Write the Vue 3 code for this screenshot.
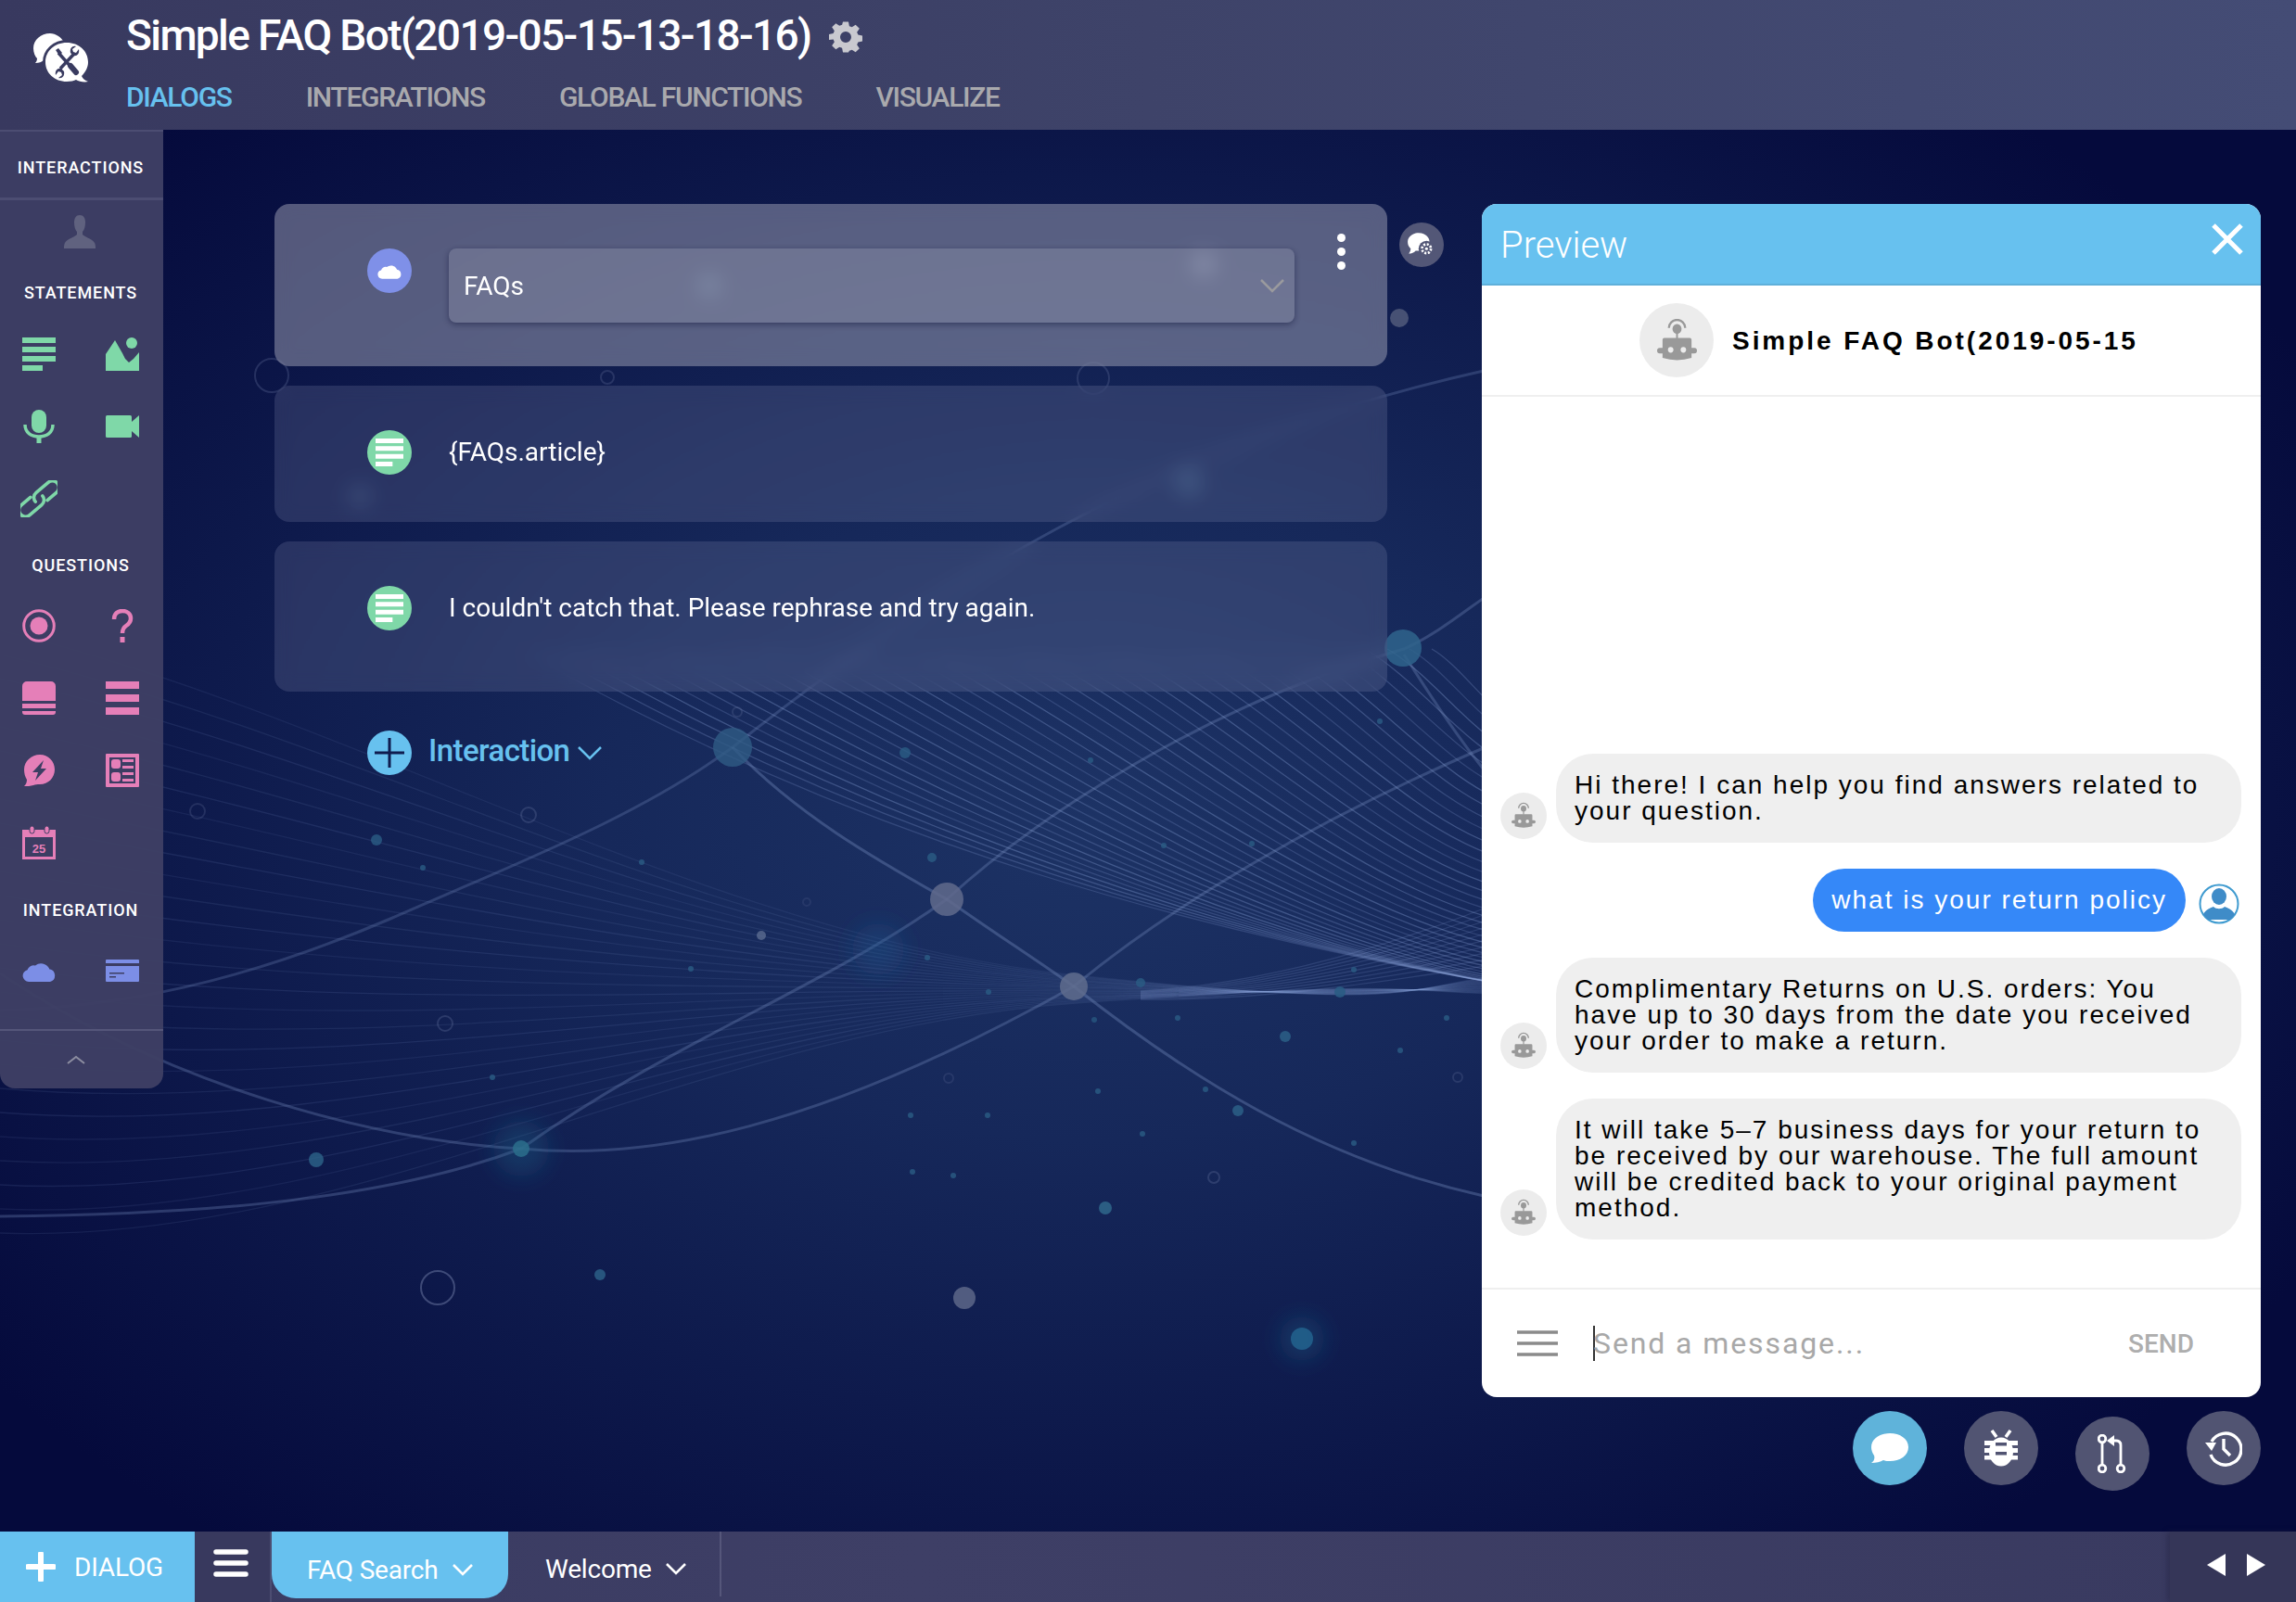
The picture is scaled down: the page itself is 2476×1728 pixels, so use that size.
<script setup>
const ff = (n) => Math.round(n * 10) / 10

const fine = []
// left fan: lines that sweep from the left edge into the crossing point
for (let i = 0; i < 26; i++) {
  const y = 680 + i * 26
  fine.push({ d: `M0 ${y} C 380 ${ff(y + 90 - i * 3)}, 760 ${ff(1010 + i * 4)}, 1160 ${ff(1052 + i * 1.2)} S 1500 ${ff(1062 + i * 0.4)}, 1640 ${ff(1050 + i * 0.9)}`, o: 0.09 + (i % 3) * 0.015 })
}
// long fan: gentle curves running down to the right, which spread out again at the panel edge
for (let i = 0; i < 42; i++) {
  const x = 560 + i * 24
  const span = 1640 - x
  const d = Math.max(0, x - 700)
  const end = 1065 - 0.0004 * d * d
  fine.push({ d: `M${x} 700 C ${ff(x + span * 0.35)} ${ff(700 + span * 0.2)}, ${ff(1640 - span * 0.3)} ${ff(end - span * 0.05)}, 1640 ${ff(end)}`, o: 0.22 + (i % 4) * 0.04 })
}
// rising fan at the far right
for (let i = 0; i < 10; i++) {
  fine.push({ d: `M1230 ${1078 - i} C 1360 ${ff(1080 - i * 2)}, 1500 ${ff(1058 - i * 4)}, 1640 ${ff(1036 - i * 8)}`, o: 0.18 })
}

const major = [
  { d: 'M0 1090 C 130 1086, 260 1060, 421 991 C 560 930, 690 880, 790 806 C 1000 640, 1240 480, 1600 400', o: 0.26, w: 3 },
  { d: 'M790 806 C 860 880, 950 930, 1021 970 C 1070 1005, 1110 1030, 1158 1064 C 1280 1160, 1420 1250, 1600 1290', o: 0.34, w: 3 },
  { d: 'M0 1050 C 180 1170, 400 1230, 562 1239 C 700 1252, 880 1220, 1158 1064 C 1260 980, 1420 880, 1640 790', o: 0.3, w: 3 },
  { d: 'M0 1312 C 180 1310, 400 1300, 562 1239 C 730 1120, 880 1070, 1021 970 C 1120 880, 1300 760, 1514 700 C 1560 680, 1600 640, 1640 620', o: 0.3, w: 3 },
  { d: 'M1514 706 C 1530 730, 1560 780, 1600 830', o: 0.3, w: 3 }
]

const dot = '#2a5c84'
const nodes = [
  [790, 806, 21, '#2f5b84', .8], [1021, 970, 18, '#606a8c', .85], [1158, 1064, 15, '#5f6c8d', .85],
  [562, 1239, 9, '#2b6f8c', .85], [341, 1251, 8, '#2d6489', .8], [1040, 1400, 12, '#626b8c', .8],
  [1404, 1444, 12, '#21608c', .9], [1513, 699, 20, '#2f648c', .85], [1509, 343, 10, '#596380', .75],
  [1298, 285, 15, '#8090b4', .32], [765, 308, 14, '#5d88ac', .28], [1282, 520, 17, '#5d88ac', .25], [388, 535, 14, '#5d88ac', .2],
  [821, 1009, 5, '#5b6b90', .8], [647, 1375, 6, dot, .9], [1192, 1303, 7, '#2e6488', .9],
  [1335, 1198, 6, dot, .9], [1386, 1118, 6, dot, .9], [1445, 1070, 6, dot, .9],
  [976, 812, 6, dot, .8], [406, 906, 6, dot, .8], [1230, 1060, 5, dot, .8],
  [1005, 925, 5, dot, .8], [1270, 1098, 3, dot, .8], [1180, 1100, 3, dot, .7],
  [1300, 1175, 3, dot, .8], [1066, 1070, 3, dot, .8], [1000, 1033, 3, dot, .8],
  [745, 1045, 3, dot, .8], [456, 936, 3, dot, .8], [692, 930, 3, dot, .8],
  [531, 1162, 3, dot, .8], [982, 1203, 3, dot, .8], [1065, 1203, 3, dot, .8],
  [1184, 1177, 3, dot, .8], [1232, 1223, 3, dot, .8], [984, 1264, 3, dot, .8],
  [1028, 1268, 3, dot, .8], [1460, 1046, 3, dot, .8], [1510, 1133, 3, dot, .8],
  [1560, 1098, 3, dot, .8], [1460, 1233, 3, dot, .8], [1488, 778, 3, dot, .8],
  [1176, 820, 3, dot, .8], [1350, 910, 3, dot, .8], [1255, 912, 3, dot, .8]
]
const rings = [
  [293, 405, 18, .22], [655, 407, 7, .2], [1179, 408, 17, .2], [472, 1389, 18, .4], [1309, 1270, 6, .22],
  [480, 1104, 8, .22], [570, 879, 8, .22], [213, 875, 8, .18], [1023, 1163, 5, .15],
  [870, 973, 4, .12], [1572, 1162, 5, .18], [795, 768, 5, .18]
]
const glows = [[947, 1024, 28, '#1f5a90', .32], [562, 1239, 30, '#1f6a90', .3], [1404, 1444, 24, '#1f6a90', .3]]

const intro = ['Hi there! I can help you find answers related to your question.']
const statementIcons = ['lines', 'image', 'mic', 'video', 'link']
const questionIcons = ['radio', 'help', 'stack', 'bars', 'bolt', 'form', 'cal']
</script>

<template>
  <div class="page">
    <!-- shared icon definitions -->
    <svg class="defs" width="0" height="0" aria-hidden="true">
      <symbol id="robot" viewBox="0 0 44 48">
        <path d="M13 10a9 9 0 0 1 18 0" fill="none" stroke="currentColor" stroke-width="2.400" />
        <ellipse cx="22" cy="11" rx="5" ry="5.500" fill="currentColor" />
        <rect x="21" y="13" width="2" height="9" fill="currentColor" />
        <path d="M8 21h28a2 2 0 0 1 2 2v9h3a2.500 2.500 0 0 1 0 6h-3v5q-16 5-32 0v-5H3a2.500 2.500 0 0 1 0-6h3v-9a2 2 0 0 1 2-2z" fill="currentColor" />
        <ellipse cx="15" cy="34" rx="3" ry="3.200" fill="#ececec" />
        <ellipse cx="29" cy="34" rx="3" ry="3.200" fill="#ececec" />
      </symbol>
      <symbol id="lines" viewBox="0 0 36 36">
        <path d="M0 0h36v6H0zM0 10h36v6H0zM0 20h36v6H0zM0 30h22v6H0z" fill="currentColor" />
      </symbol>
      <symbol id="cloud" viewBox="0 0 36 24">
        <path d="M7 24a6.500 6.500 0 0 1-1.500-12.800A7 7 0 0 1 14 6.500 10 10 0 0 1 29 9.500a5.500 5.500 0 0 1 0 .8A7 7 0 0 1 30 24z" fill="currentColor" />
      </symbol>
    </svg>

    <header class="topbar">
      <svg class="logo" viewBox="0 0 60 54">
        <path d="M18 0C8 0 0 7 0 16c0 5 2 9 4 11 0 2-1 4-2 5 4 0 7-1 9-3 6 2 12 2 16-2 9-6 10-17 0-24-3-2-6-3-9-3z" fill="#fff" />
        <ellipse cx="36" cy="31" rx="26" ry="24" fill="#393b60" />
        <path d="M36 10c-13 0-23 9-23 21s10 21 23 21c4 0 8-1 10-2 3 2 9 3 13 2-3-1-6-3-7-6 4-4 7-9 7-15 0-12-10-21-23-21z" fill="#fff" />
        <path d="M27 21l17 19" stroke="#393b60" stroke-width="3.400" fill="none" />
        <path d="M40 35l6 7" stroke="#393b60" stroke-width="6" fill="none" stroke-linecap="round" />
        <path d="M24 18l3-2 4 5-3 3z" fill="#393b60" />
        <path d="M43 23L29 38" stroke="#393b60" stroke-width="3.400" fill="none" />
        <path d="M49 17l-3 4-3-1-1-3 4-3c-4-1-7 2-6 7l3 3c4 1 7-2 6-7zM24 45l3-4 3 1 1 3-4 3c4 1 7-2 6-7l-3-3c-4-1-7 2-6 7z" fill="#393b60" />
      </svg>
      <div class="head-main">
        <div class="bot-row">
          <h1>Simple FAQ Bot(2019-05-15-13-18-16)</h1>
          <svg class="gear" viewBox="0 0 24 24"><path fill-rule="evenodd" d="M10 1h4l.6 3.100 1.900.8 2.600-1.800 2.800 2.800-1.800 2.600.8 1.900 3.100.6v4l-3.100.6-.8 1.900 1.800 2.600-2.800 2.800-2.600-1.800-1.900.8L14 23h-4l-.6-3.100-1.900-.8-2.600 1.800-2.800-2.800 1.800-2.600-.8-1.900L0 14v-4l3.100-.6.8-1.900-1.800-2.600 2.800-2.800 2.600 1.800 1.900-.8zM12 8a4 4 0 1 0 0 8 4 4 0 0 0 0-8z" /></svg>
        </div>
        <nav class="tabs">
          <a class="active">DIALOGS</a><a>INTEGRATIONS</a><a>GLOBAL FUNCTIONS</a><a>VISUALIZE</a>
        </nav>
      </div>
    </header>

    <main class="stage">
      <svg class="backdrop" viewBox="0 0 2476 1512" width="2476" height="1512" aria-hidden="true">
        <defs>
          <filter id="soft" x="-100%" y="-100%" width="300%" height="300%"><feGaussianBlur stdDeviation="11" /></filter>
        </defs>
        <g transform="translate(0,-140)" fill="none">
          <path v-for="(l, i) in fine" :key="'f' + i" :d="l.d" stroke="#8ea6dc" :stroke-opacity="l.o" stroke-width="1.300" />
          <path v-for="(l, i) in major" :key="'m' + i" :d="l.d" stroke="#7f95c8" :stroke-opacity="l.o" :stroke-width="l.w" />
          <circle v-for="(g, i) in glows" :key="'g' + i" :cx="g[0]" :cy="g[1]" :r="g[2]" :fill="g[3]" :fill-opacity="g[4]" filter="url(#soft)" />
          <circle v-for="(r, i) in rings" :key="'r' + i" :cx="r[0]" :cy="r[1]" :r="r[2]" stroke="#8a96bd" :stroke-opacity="r[3]" stroke-width="2" />
          <circle v-for="(n, i) in nodes" :key="'n' + i" :cx="n[0]" :cy="n[1]" :r="n[2]" :fill="n[3]" :fill-opacity="n[4]" />
        </g>
      </svg>

      <aside class="sidebar">
        <div class="side-head">INTERACTIONS</div>
        <div class="side-person">
          <svg viewBox="0 0 36 36" width="36" height="36"><path d="M18 0c4 0 6 3 6 8 0 4-1 8-3 10v3c3 3 11 5 13 9 1 2 1 4 1 6H1c0-2 0-4 1-6 2-4 10-6 13-9v-3c-2-2-3-6-3-10 0-5 2-8 6-8z" fill="#60627f" /></svg>
        </div>
        <div class="side-label l1">STATEMENTS</div>
        <div class="side-grid green">
          <div v-for="n in statementIcons" :key="n" class="cell">
            <svg v-if="n === 'lines'" width="36" height="36"><use href="#lines" /></svg>
            <svg v-else-if="n === 'image'" viewBox="0 0 36 36" width="36" height="36"><circle cx="28" cy="6" r="6" fill="currentColor" /><path d="M0 36V18L10 3l8 14 3 6 4 4 5-4 6-7v20z" fill="currentColor" /></svg>
            <svg v-else-if="n === 'mic'" viewBox="0 0 36 36" width="36" height="36"><rect x="10" y="0" width="16" height="25" rx="8" fill="currentColor" /><path d="M3 16c0 9 7 13 15 13s15-4 15-13" fill="none" stroke="currentColor" stroke-width="3.500" /><rect x="15.500" y="28" width="5" height="8" fill="currentColor" /></svg>
            <svg v-else-if="n === 'video'" viewBox="0 0 36 24" width="36" height="24"><rect width="28" height="24" rx="1.500" fill="currentColor" /><path d="M36 0v24L28 17V7z" fill="currentColor" /></svg>
            <svg v-else-if="n === 'link'" viewBox="0 0 40 40" width="40" height="40"><g fill="none" stroke="currentColor" stroke-width="3.600" stroke-linecap="round" transform="rotate(-40 20 20)"><path d="M14 13H1a7 7 0 0 0 0 14h17a7 7 0 0 0 7-7" /><path d="M15 20a7 7 0 0 1 7-7h17a7 7 0 0 1 0 14H26" /></g></svg>
          </div>
        </div>
        <div class="side-label l2">QUESTIONS</div>
        <div class="side-grid pink">
          <div v-for="n in questionIcons" :key="n" class="cell">
            <svg v-if="n === 'radio'" viewBox="0 0 36 36" width="36" height="36"><circle cx="18" cy="18" r="16.300" fill="none" stroke="currentColor" stroke-width="3" /><circle cx="18" cy="18" r="9.500" fill="currentColor" /></svg>
            <svg v-else-if="n === 'help'" viewBox="0 0 36 36" width="36" height="36"><path d="M9 11c0-6 4-9 9-9s9 3 9 8c0 4-2 6-5 8-3 2-4 4-4 8" fill="none" stroke="currentColor" stroke-width="4.500" /><rect x="15.500" y="30" width="5" height="6" fill="currentColor" /></svg>
            <svg v-else-if="n === 'stack'" viewBox="0 0 36 36" width="36" height="36"><path d="M5 0h26a5 5 0 0 1 5 5v16H0V5a5 5 0 0 1 5-5zM0 24h36v5H0zM0 32h36v1a3 3 0 0 1-3 3H3a3 3 0 0 1-3-3z" fill="currentColor" /></svg>
            <svg v-else-if="n === 'bars'" viewBox="0 0 36 36" width="36" height="36"><path d="M0 0h36v8H0zM0 14h36v8H0zM0 28h36v8H0z" fill="currentColor" /></svg>
            <svg v-else-if="n === 'bolt'" viewBox="0 0 36 36" width="36" height="36"><path d="M19 1c9 0 16 7 16 16s-7 16-16 16c-3 0-5 0-7 1-3 1-7 1-10 1 2-2 3-4 3-7-2-3-3-7-3-11C2 8 10 1 19 1z" fill="currentColor" /><path d="M23 7 11 20h6l-3 9 12-13h-6z" fill="#3d3e63" /></svg>
            <svg v-else-if="n === 'form'" viewBox="0 0 36 36" width="36" height="36"><path fill-rule="evenodd" d="M1 0h34a1 1 0 0 1 1 1v34a1 1 0 0 1-1 1H1a1 1 0 0 1-1-1V1a1 1 0 0 1 1-1zM4 4v28h28V4z" fill="currentColor" /><rect x="6" y="6" width="10" height="10" rx="3" fill="currentColor" /><rect x="6" y="20" width="10" height="10" rx="3" fill="currentColor" /><path d="M18 6h12v3H18zM18 13h12v3H18zM18 20h12v3H18zM18 27h12v3H18z" fill="currentColor" /></svg>
            <svg v-else-if="n === 'cal'" viewBox="0 0 36 36" width="36" height="36"><path fill-rule="evenodd" d="M0 4h36v32H0zM3 12v21h30V12z" fill="currentColor" /><rect x="8" y="0" width="5" height="8" rx="2.500" fill="currentColor" stroke="#3d3e63" stroke-width="1" /><rect x="24" y="0" width="5" height="8" rx="2.500" fill="currentColor" stroke="#3d3e63" stroke-width="1" /><text x="18" y="28.500" text-anchor="middle" class="cal-num">25</text></svg>
          </div>
        </div>
        <div class="side-label l3">INTEGRATION</div>
        <div class="side-grid blue">
          <div class="cell"><svg width="36" height="24"><use href="#cloud" /></svg></div>
          <div class="cell"><svg viewBox="0 0 36 24" width="36" height="24"><path d="M1 0h34a1 1 0 0 1 1 1v3H0V1a1 1 0 0 1 1-1zM0 7h36v16a1 1 0 0 1-1 1H1a1 1 0 0 1-1-1z" fill="currentColor" /><path d="M4 14h16v1.500H4zM4 18h7v1.500H4z" fill="#3d3e63" /></svg></div>
        </div>
        <div class="side-foot">
          <svg viewBox="0 0 20 10" width="20" height="10"><path d="M1 9l9-7 9 7" fill="none" stroke="#8c8da0" stroke-width="2" /></svg>
        </div>
      </aside>

      <section class="flow">
        <div class="card card-select">
          <span class="badge b-blue"><svg width="26" height="20"><use href="#cloud" /></svg></span>
          <div class="select">
            <span>FAQs</span>
            <svg viewBox="0 0 28 16" width="28" height="16"><path d="M2 2l12 12L26 2" fill="none" stroke="#9a9a9e" stroke-width="2.500" /></svg>
          </div>
          <div class="dots"><i></i><i></i><i></i></div>
        </div>
        <div class="card card-text">
          <span class="badge b-green"><svg width="30" height="30"><use href="#lines" /></svg></span>
          <p>{FAQs.article}</p>
        </div>
        <div class="card card-text tall">
          <span class="badge b-green"><svg width="30" height="30"><use href="#lines" /></svg></span>
          <p>I couldn't catch that. Please rephrase and try again.</p>
        </div>
        <div class="add-row">
          <span class="badge b-add"><svg viewBox="0 0 32 32" width="32" height="32"><path d="M16 0v32M0 16h32" stroke="#0f1c4f" stroke-width="3" /></svg></span>
          <span class="add-text">Interaction</span>
          <svg viewBox="0 0 28 16" width="28" height="16"><path d="M2 2l12 12L26 2" fill="none" stroke="#67c1ef" stroke-width="2.500" /></svg>
        </div>
      </section>

      <button class="settings-bubble" aria-label="settings">
        <svg viewBox="0 0 30 30" width="32" height="32"><path d="M12 3C6 3 1 7 1 12c0 3 1 5 3 7 0 2-1 4-2 5 3 0 5-1 7-3h3c6 0 11-4 11-9S18 3 12 3z" fill="#fff" /><circle cx="20" cy="19" r="8" fill="#535777" /><circle cx="20" cy="19" r="4.500" fill="none" stroke="#fff" stroke-width="2.500" stroke-dasharray="2 1.500" /><circle cx="20" cy="19" r="1.500" fill="#fff" /></svg>
      </button>

      <div class="preview-col">
        <section class="preview">
          <div class="pv-head">
            <span>Preview</span>
            <svg viewBox="0 0 34 34" width="34" height="34"><path d="M2 2l30 30M32 2L2 32" stroke="#fff" stroke-width="5" /></svg>
          </div>
          <div class="pv-bot">
            <span class="avatar big"><svg width="43" height="47"><use href="#robot" /></svg></span>
            <strong>Simple FAQ Bot(2019-05-15</strong>
          </div>
          <div class="messages">
            <div class="msg" v-for="t in intro" :key="t">
              <span class="avatar"><svg width="26" height="30"><use href="#robot" /></svg></span>
              <div class="bubble">{{ t }}</div>
            </div>
            <div class="msg mine">
              <div class="bubble me">what is your return policy</div>
              <span class="me-avatar">
                <svg viewBox="0 0 44 46" width="44" height="46"><circle cx="22" cy="23" r="20.500" fill="#fff" stroke="#3f9bd0" stroke-width="2" /><ellipse cx="22" cy="15" rx="8" ry="9" fill="#3f8cc8" /><path d="M5 34c3-5 8-7 11-8 3 3 9 3 12 0 3 1 8 3 11 8-2 3-3 4-5 6H10c-2-2-3-3-5-6z" fill="#3f8cc8" /></svg>
              </span>
            </div>
            <div class="msg">
              <span class="avatar"><svg width="26" height="30"><use href="#robot" /></svg></span>
              <div class="bubble">Complimentary Returns on U.S. orders: You have up to 30 days from the date you received your order to make a return.</div>
            </div>
            <div class="msg">
              <span class="avatar"><svg width="26" height="30"><use href="#robot" /></svg></span>
              <div class="bubble">It will take 5–7 business days for your return to be received by our warehouse. The full amount will be credited back to your original payment method.</div>
            </div>
          </div>
          <div class="composer">
            <svg viewBox="0 0 44 28" width="44" height="28"><path d="M0 2h44M0 14h44M0 26h44" stroke="#8b8b8b" stroke-width="3.500" /></svg>
            <div class="field"><i class="caret"></i><span>Send a message...</span></div>
            <span class="send">SEND</span>
          </div>
        </section>
        <div class="pv-actions">
          <button class="round on" aria-label="chat">
            <svg viewBox="0 0 40 36" width="40" height="36"><path d="M20 0c11 0 20 6 20 15s-9 15-20 15c-3 0-5 0-7-1-3 2-8 3-13 3 3-2 4-5 3-8-2-3-3-6-3-9C0 6 9 0 20 0z" transform="translate(0,2)" fill="#fff" /></svg>
          </button>
          <button class="round" aria-label="debug">
            <svg viewBox="0 0 36 40" width="36" height="40"><path d="M8 1l5 7M28 1l-5 7" stroke="#fff" stroke-width="3.500" fill="none" /><ellipse cx="18" cy="24" rx="13" ry="15.500" fill="#fff" /><path d="M0 12h36v5H0zM0 20h36v5H0zM0 28h36v4.500H0z" fill="#fff" /><path d="M12 14h12v3.500H12zM12 24h12v3.500H12z" fill="#515472" /></svg>
          </button>
          <button class="round drop" aria-label="compare">
            <svg viewBox="0 0 32 42" width="32" height="42"><g fill="none" stroke="#fff" stroke-width="2.800"><circle cx="5" cy="5" r="3.800" /><circle cx="5" cy="37" r="3.800" /><circle cx="25" cy="37" r="3.800" /><path d="M5 9v24M25 33V12q0-5-5-5h-5" /></g><path d="M18 1v12l-8-6z" fill="#fff" /></svg>
          </button>
          <button class="round" aria-label="history">
            <svg viewBox="0 0 40 40" width="40" height="40"><path d="M7 13A17 17 0 1 1 6 27" fill="none" stroke="#fff" stroke-width="3.400" /><path d="M0 14h12l-5 9z" fill="#fff" /><path d="M20 10v11l7 7" fill="none" stroke="#fff" stroke-width="3.400" /></svg>
          </button>
        </div>
      </div>
    </main>

    <footer class="bottombar">
      <button class="new-dialog">
        <svg viewBox="0 0 32 32" width="32" height="32"><path d="M16 2v28M2 16h28" stroke="#fff" stroke-width="6" stroke-linecap="round" /></svg>
        <span>DIALOG</span>
      </button>
      <button class="menu">
        <svg viewBox="0 0 38 30" width="38" height="30"><path d="M3 3h32M3 15h32M3 27h32" stroke="#fff" stroke-width="5.500" stroke-linecap="round" /></svg>
      </button>
      <div class="tab cur"><span>FAQ Search</span><svg viewBox="0 0 24 14" width="24" height="14"><path d="M2 2l10 10L22 2" fill="none" stroke="#fff" stroke-width="2.600" /></svg></div>
      <div class="tab"><span>Welcome</span><svg viewBox="0 0 24 14" width="24" height="14"><path d="M2 2l10 10L22 2" fill="none" stroke="#fff" stroke-width="2.600" /></svg></div>
      <div class="pager">
        <svg viewBox="0 0 20 24" width="20" height="24"><path d="M20 0v24L0 12z" fill="#fff" /></svg>
        <svg viewBox="0 0 20 24" width="20" height="24"><path d="M0 0v24l20-12z" fill="#fff" /></svg>
      </div>
    </footer>
  </div>
</template>

<style scoped>
.page {
  width: 2476px;
  height: 1728px;
  display: flex;
  flex-direction: column;
  overflow: hidden;
  font-family: Roboto, "Liberation Sans", sans-serif;
  color: #fff;
  background: radial-gradient(ellipse 1500px 1000px at 1180px 880px, #1d3365 0%, #16285a 35%, #0e1a4c 65%, #050a3c 100%);
}
.defs { position: absolute; }

.topbar {
  height: 140px;
  flex: none;
  display: flex;
  background: linear-gradient(90deg, #38395f 0%, #3e4369 50%, #444c75 100%);
  position: relative;
  z-index: 2;
}
.logo { width: 60px; height: 54px; margin: 36px 0 0 36px; flex: none; }
.head-main { margin-left: 40px; }
.bot-row { display: flex; align-items: center; height: 76px; }
h1 { margin: 0; font-size: 46px; font-weight: 500; letter-spacing: -1.600px; white-space: nowrap; }
.gear { width: 36px; height: 36px; margin: 4px 0 0 19px; fill: #c9c9cf; }
.tabs { display: flex; gap: 80px; margin-top: 9px; }
.tabs a { font-size: 30px; line-height: 40px; color: #a9a9ad; letter-spacing: -1.300px; font-weight: 500; }
.tabs a.active { color: #67c1ef; }

.stage { flex: 1; position: relative; display: flex; min-height: 0; }
.backdrop { position: absolute; left: 0; top: 0; }

.sidebar {
  position: relative;
  width: 176px;
  height: 1034px;
  flex: none;
  background: rgba(62, 63, 100, 0.97);
  border-top: 2px solid #4c4d72;
  border-radius: 0 0 16px 16px;
  overflow: hidden;
  box-sizing: border-box;
}
.side-head {
  height: 71px;
  line-height: 78px;
  border-bottom: 3px solid #4c4d72;
  text-align: center;
  font-size: 18px;
  font-weight: 500;
  letter-spacing: 0.9px;
  padding-right: 2px;
}
.side-person { height: 68px; display: flex; justify-content: center; align-items: center; padding-right: 4px; }
.side-label { text-align: center; font-size: 18px; font-weight: 500; letter-spacing: 0.9px; padding-right: 2px; }
.l1 { height: 62px; line-height: 64px; margin-bottom: -3px; }
.l2 { height: 64px; line-height: 66px; margin-bottom: -5px; }
.l3 { height: 66px; line-height: 68px; margin-bottom: -6px; }
.side-grid { display: grid; grid-template-columns: 84px 96px; grid-auto-rows: 78px; }
.cell { display: flex; align-items: center; justify-content: center; }
.green { color: #7fd8a8; }
.pink { color: #e57fb8; }
.blue { color: #7c8ee6; }
.cal-num { font-family: "Liberation Sans", sans-serif; font-size: 13px; font-weight: 700; fill: #e57fb8; }
.side-foot {
  margin-top: 24px;
  height: 62px;
  border-top: 2px solid #55567a;
  display: flex;
  align-items: center;
  justify-content: center;
  padding-right: 12px;
}

.flow {
  position: relative;
  width: 1200px;
  margin: 80px 0 0 120px;
  display: flex;
  flex-direction: column;
  gap: 21px;
}
.card {
  display: flex;
  align-items: flex-start;
  gap: 40px;
  padding: 48px 0 0 100px;
  border-radius: 16px;
  box-sizing: border-box;
  background: rgba(150, 155, 190, 0.2);
  backdrop-filter: blur(10px);
}
.card-select { height: 175px; background: rgba(190, 190, 205, 0.42); position: relative; }
.card-text { height: 147px; }
.card-text.tall { height: 162px; }
.badge { width: 48px; height: 48px; border-radius: 50%; flex: none; display: flex; align-items: center; justify-content: center; }
.b-blue { background: #7f90e8; color: #fff; }
.b-green { background: #7fd8a8; color: #fff; }
.b-add { background: #67c1ef; }
.select {
  width: 912px;
  height: 80px;
  border-radius: 8px;
  background: rgba(255, 255, 255, 0.13);
  box-shadow: 0 2px 6px rgba(10, 15, 50, .45);
  display: flex;
  align-items: center;
  justify-content: space-between;
  padding: 0 10px 0 16px;
  box-sizing: border-box;
  font-size: 28px;
}
.dots { position: absolute; left: 1146px; top: 32px; display: flex; flex-direction: column; gap: 6px; }
.dots i { width: 9px; height: 9px; border-radius: 50%; background: #fff; }
.card p { margin: 0; font-size: 28px; line-height: 48px; }
.add-row { display: flex; align-items: center; padding: 21px 0 0 100px; }
.add-text { color: #67c1ef; font-size: 33px; font-weight: 500; letter-spacing: -0.600px; margin: -5px 8px 0 18px; }

.settings-bubble {
  position: absolute;
  left: 1509px;
  top: 100px;
  width: 48px;
  height: 48px;
  border-radius: 50%;
  border: 0;
  padding: 0;
  background: #535777;
  display: flex;
  align-items: center;
  justify-content: center;
}

.preview-col { position: absolute; right: 38px; top: 80px; width: 840px; }
.preview {
  height: 1287px;
  background: #fff;
  border-radius: 16px;
  display: flex;
  flex-direction: column;
  overflow: hidden;
}
.pv-head {
  height: 88px;
  flex: none;
  box-sizing: border-box;
  background: #67c1ef;
  border-bottom: 2px solid #5fb0da;
  display: flex;
  align-items: center;
  justify-content: space-between;
  padding: 2px 19px 0 20px;
  font-size: 40px;
  font-weight: 300;
}
.pv-head svg { margin-top: -12px; }
.pv-bot {
  height: 120px;
  flex: none;
  box-sizing: border-box;
  border-bottom: 2px solid #efefef;
  display: flex;
  align-items: center;
  padding: 0 0 0 170px;
  gap: 20px;
  color: #000;
}
.pv-bot strong { font-family: "Liberation Sans", sans-serif; font-size: 28px; letter-spacing: 2.950px; margin-top: 1px; }
.avatar {
  width: 50px;
  height: 50px;
  border-radius: 50%;
  background: #ececec;
  color: #999;
  flex: none;
  display: flex;
  align-items: center;
  justify-content: center;
}
.avatar.big { width: 80px; height: 80px; }
.messages {
  flex: 1;
  min-height: 0;
  display: flex;
  flex-direction: column;
  justify-content: flex-end;
  gap: 28px;
  padding: 0 21px 52px 20px;
}
.msg { display: flex; align-items: flex-end; gap: 10px; }
.msg > .avatar { margin-bottom: 4px; }
.bubble {
  flex: 1;
  box-sizing: border-box;
  padding: 20px 20px;
  background: #efefef;
  color: #000;
  border-radius: 40px;
  font-family: "Liberation Sans", sans-serif;
  font-size: 28px;
  line-height: 28px;
  letter-spacing: 2px;
}
.mine { justify-content: flex-end; align-items: flex-start; gap: 14px; padding-right: 2px; }
.bubble.me { flex: none; background: #3588f8; color: #fff; border-radius: 34px; }
.me-avatar { margin-top: 15px; display: block; height: 46px; }
.composer {
  height: 118px;
  flex: none;
  box-sizing: border-box;
  border-top: 2px solid #efefef;
  display: flex;
  align-items: center;
  padding: 0 72px 0 38px;
}
.field { flex: 1; display: flex; align-items: center; margin-left: 38px; color: #a8a8a8; font-size: 32px; letter-spacing: 1.900px; }
.caret { width: 2px; height: 38px; background: #333; margin-right: -2px; }
.send { color: #aeaeae; font-size: 28px; font-weight: 500; }
.pv-actions { display: flex; justify-content: space-between; padding-top: 15px; padding-left: 400px; align-items: flex-start; }
.round {
  width: 80px;
  height: 80px;
  border-radius: 50%;
  border: 0;
  padding: 0;
  background: #515472;
  display: flex;
  align-items: center;
  justify-content: center;
}
.round.on { background: #5fb3da; }
.round.drop { margin-top: 6px; }

.bottombar {
  height: 76px;
  flex: none;
  position: relative;
  display: flex;
  background: linear-gradient(90deg, #393a60, #3e3f66 40%, #393a60);
}
.new-dialog {
  width: 210px;
  height: 76px;
  border: 0;
  padding: 0 0 0 28px;
  background: #67c1ef;
  color: #fff;
  display: flex;
  align-items: center;
  gap: 20px;
  font: 400 28px Roboto, sans-serif;
  letter-spacing: -0.2px;
}
.menu {
  width: 83px;
  height: 76px;
  border: 0;
  border-right: 2px solid #4c4d72;
  padding: 0 4px 8px 0;
  background: #38395e;
  box-sizing: border-box;
  display: flex;
  align-items: center;
  justify-content: center;
}
.tab {
  width: 230px;
  height: 72px;
  box-sizing: border-box;
  display: flex;
  align-items: center;
  gap: 14px;
  padding: 10px 0 0 40px;
  font-size: 28px;
  letter-spacing: -0.2px;
}
.tab:not(.cur) { height: 70px; border-right: 2px solid #55567a; }
.tab.cur {
  width: 255px;
  padding-left: 38px;
  background: #67c1ef;
  border-radius: 0 0 26px 26px;
}
.pager {
  margin-left: auto;
  width: 136px;
  background: #353658;
  display: flex;
  align-items: center;
  gap: 23px;
  padding: 0 0 4px 40px;
  box-sizing: border-box;
  box-shadow: -3px 0 6px rgba(30, 30, 60, .4);
}
</style>

<style>
html, body { margin: 0; background: #050a3c; }
button { cursor: default; }
</style>
